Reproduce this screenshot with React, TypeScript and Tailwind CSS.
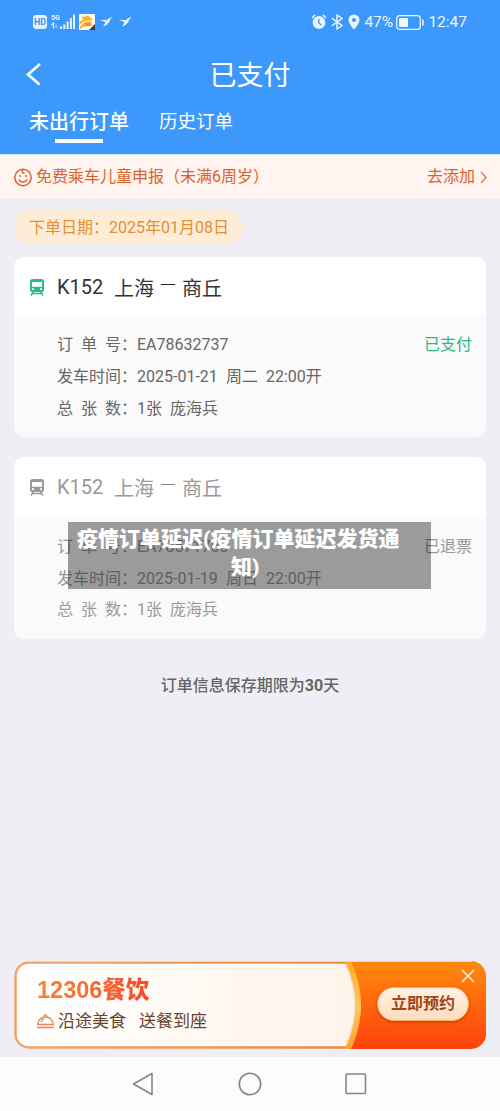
import React from "react";

function StatusBar() {
  return (
    <div className="flex h-[44px] items-center pl-[33px] pr-[33px] text-[#e9f5ff]">
      <div className="flex h-[14px] w-[14px] items-center justify-center rounded-[3px] bg-[#e4f2ff] text-[9px] leading-none font-bold text-[#3c98fb]">HD</div>
      <div className="ml-[4px] flex h-[16px] w-[24px]">
        <div className="flex w-[9px] flex-col">
          <span className="text-[7px] leading-[8px] font-bold">5G</span>
          <svg width="8" height="7" viewBox="0 0 8 7" fill="none" stroke="#e9f5ff">
            <path d="M0.5 3L2.5 1V6.5" strokeWidth="1.2" />
            <path d="M5 1V6L6.5 4" strokeWidth="1" opacity=".5" />
          </svg>
        </div>
        <svg width="15" height="16" viewBox="0 0 15 16" fill="#e9f5ff">
          <path d="M0 12.5h2V15H0zM3.300 10.500h2V15h-2zM6.600 7.500h2V15h-2zM9.900 4h2v11h-2zM13 .5h2V15h-2z" />
        </svg>
      </div>
      <svg className="ml-[4px]" width="16" height="16" viewBox="0 0 16 16">
        <path fill="#fffaf0" d="M0 0h16v16H0z" />
        <path fill="#f6b52b" d="M2.500 2.500L5 3l3-1.500 2 .5 1 1.500 2.500 1.500-1 1.500-6 .5-3 1.500L.5 11V7.500L4 6z" />
        <path fill="#f6b52b" d="M6 8l7-.5-1 2.500 2 1-2 1H8l-4 1-3 2v-2.500L4 10z" />
        <path fill="#f58a32" d="M6 9.500l4.500-1 1 3.500H6.500z" />
        <path fill="#423b36" d="M16 10v6h-6z" />
      </svg>
      <Bird className="ml-[5px]" />
      <Bird className="ml-[6px]" />
      <div className="ml-auto flex items-center">
        <svg width="16" height="16" viewBox="0 0 16 16" fill="none">
          <circle cx="8" cy="8.500" r="6.400" fill="#e9f5ff" />
          <path d="M1 4L4 1M12 1l3 3" stroke="#e9f5ff" strokeWidth="1.600" />
          <path d="M7.800 5v4l2.500 2" stroke="#3c98fb" strokeWidth="1.400" />
        </svg>
        <svg className="ml-[4px]" width="12" height="16" viewBox="0 0 12 16" fill="none" stroke="#e9f5ff" strokeWidth="1.500">
          <path d="M0.800 4.200L11 11.500L6 15V1l5 3.500L0.800 11.800" />
        </svg>
        <svg className="ml-[5px]" width="12" height="16" viewBox="0 0 12 16">
          <path fill="#e9f5ff" fillRule="evenodd" d="M6 .5a5.500 5.500 0 0 0-5.500 5.500C.5 10 6 15.500 6 15.500S11.500 10 11.500 6A5.500 5.500 0 0 0 6 .5zM6 4a2 2 0 1 1 0 4 2 2 0 0 1 0-4z" />
        </svg>
        <span className="ml-[4px] w-[29px] text-[15.500px] leading-[20px] whitespace-nowrap">47%</span>
        <svg className="ml-[3px]" width="29" height="15" viewBox="0 0 29 15" fill="none">
          <rect x=".7" y=".7" width="23.600" height="13.600" rx="2.800" stroke="#e9f5ff" strokeWidth="1.300" />
          <rect x="3" y="3" width="9" height="9" rx="1" fill="#e9f5ff" />
          <path d="M27 4.500v6" stroke="#e9f5ff" strokeWidth="1.500" />
        </svg>
        <span className="ml-[3px] text-[15.500px] leading-[20px]">12:47</span>
      </div>
    </div>
  );
}

function Bird({ className }: { className: string }) {
  return (
    <svg className={className} width="13" height="10" viewBox="0 0 13 10" fill="#e9f5ff">
      <path d="M0 3.200L4.500 2.700l2.200.8C8 1.500 10 .5 13 .2c-2 .9-3.200 2.400-3.700 4.800L6.500 8 3 9.800 5 6.500 4.800 4.600z" />
    </svg>
  );
}

function TrainIcon({ color }: { color: string }) {
  return (
    <svg className="mt-[22px] ml-[16px] shrink-0" width="14" height="17" viewBox="0 0 14 17">
      <path fill={color} fillRule="evenodd" d="M2.600 0h8.800C13 0 14 1 14 2.500v8.200c0 1.500-1 2.300-2.600 2.300H2.600C1 13 0 12.200 0 10.700V2.500C0 1 1 0 2.600 0zM2 3v4.800h10V3zM2 9.300v1.700h2V9.300zM10 9.300v1.700h2V9.300z" />
      <path d="M3.500 12.500L1 16.500M10.500 12.500l2.500 4M2.500 14.500h9" stroke={color} strokeWidth="1.500" fill="none" />
    </svg>
  );
}

type OrderProps = {
  number: string;
  date: string;
  day: string;
  status: string;
  refunded?: boolean;
};

function OrderCard({ number, date, day, status, refunded }: OrderProps) {
  return (
    <section className={refunded ? "mx-[14px] mt-[20px] h-[182px] shrink-0 overflow-hidden rounded-[10px] bg-[#fafafa] text-[#999]" : "mx-[14px] mt-[13px] h-[180px] shrink-0 overflow-hidden rounded-[10px] bg-[#fafafa] text-[#666]"}>
      <div className={refunded ? "flex h-[60px] bg-white text-[20px] leading-[28px] text-[#999]" : "flex h-[58px] bg-white text-[20px] leading-[28px] text-[#333]"}>
        <TrainIcon color={refunded ? "#999999" : "#2bbd90"} />
        <span className="mt-[16px] ml-[13px] w-[57px]">K152</span>
        <span className="mt-[18px] w-[47px]">上海</span>
        <span className={refunded ? "mt-[27px] h-px w-[14px] bg-[#888]" : "mt-[27px] h-px w-[14px] bg-[#222]"} />
        <span className="mt-[18px] ml-[7px]">商丘</span>
      </div>
      <div className="pt-[14px] pr-[14px] pl-[43px] text-[16px] leading-[32px] whitespace-pre">
        <div className="flex h-[32px] justify-between">
          <div className="flex">
            <Label chars={["订", "单", "号"]} />
            <span>{number}</span>
          </div>
          <span className={refunded ? "text-[#999]" : "text-[#29b985]"}>{status}</span>
        </div>
        <div className="flex h-[32px]">
          <span className="w-[80px]">发车时间：</span>
          <span className="w-[89px]">{date}</span>
          <span className="w-[40px]">{day}</span>
          <span>22:00开</span>
        </div>
        <div className={refunded ? "-mt-[1px] flex" : "flex"}>
          <Label chars={["总", "张", "数"]} />
          <span className="w-[33px]">1张</span>
          <span>庞海兵</span>
        </div>
      </div>
    </section>
  );
}

function Label({ chars }: { chars: string[] }) {
  return (
    <span className="flex w-[80px] gap-[8px]">
      <span>{chars[0]}</span>
      <span>{chars[1]}</span>
      <span>{chars[2]}：</span>
    </span>
  );
}

function MealBanner() {
  return (
    <div className="relative mx-[14px] mt-[265px] h-[88px] shrink-0 overflow-hidden rounded-[15px]">
      <svg className="absolute inset-0" width="472" height="88" viewBox="0 0 472 88">
        <defs>
          <linearGradient id="orange" x1="0" y1="0" x2="0" y2="1">
            <stop offset="0" stopColor="#ff8a0c" />
            <stop offset="1" stopColor="#ff420e" />
          </linearGradient>
          <linearGradient id="cream">
            <stop offset="0" stopColor="#ffffff" />
            <stop offset="1" stopColor="#fff4ea" />
          </linearGradient>
          <linearGradient id="gold" gradientUnits="userSpaceOnUse" x1="0" y1="0" x2="0" y2="88">
            <stop offset="0" stopColor="#ffaa2c" />
            <stop offset=".5" stopColor="#ffc95e" />
            <stop offset="1" stopColor="#ffa126" />
          </linearGradient>
          <linearGradient id="edge">
            <stop offset="0" stopColor="#f2a36b" />
            <stop offset="1" stopColor="#ec8b3c" />
          </linearGradient>
        </defs>
        <path d="M335 0h137v88H335z" fill="url(#orange)" />
        <path d="M15 1.500H335Q355 44 335 86.500H15A13.500 13.500 0 0 1 1.500 73V15A13.500 13.500 0 0 1 15 1.500z" fill="url(#cream)" stroke="url(#edge)" strokeWidth="2.500" />
        <path d="M332 3Q351 44 332 85" fill="none" stroke="#f7dfd0" strokeWidth="2.500" />
        <path d="M334 0Q354.500 44 334 88" fill="none" stroke="url(#gold)" strokeWidth="5.500" />
        <path d="M14 .5H458" stroke="#ffcda0" strokeWidth="1" />
        <path d="M448 9l12 12M460 9l-12 12" stroke="#fff0df" strokeWidth="1.600" />
      </svg>
      <div className="relative flex h-full justify-between pr-[17px] pl-[23px]">
        <div className="pt-[11px]">
          <div className="h-[33px] w-max bg-gradient-to-r from-[#f68534] to-[#f44a2e] bg-clip-text text-[23.500px] leading-[33px] font-bold text-transparent">
            <span className="font-['Liberation_Sans',sans-serif]">12306</span>
            <span className="font-['Noto_Sans_CJK_SC',sans-serif] font-black">餐饮</span>
          </div>
          <div className="flex h-[32px] items-center text-[17px] leading-[24px] text-[#664330]">
            <svg className="mr-[4px]" width="17" height="15" viewBox="0 0 17 15" fill="none" stroke="#ef8549" strokeWidth="1.300">
              <path d="M.7 10.500h15.600C16 6 12.700 3 8.500 3S1 6 .7 10.500zM7 2.500c0-2.300 3-2.300 3 0M0 13.500h17M4 8c.5-1.600 1.500-2.500 3-2.800" />
            </svg>
            <span className="w-[81px]">沿途美食</span>
            <span>送餐到座</span>
          </div>
        </div>
        <button className="mt-[26px] h-[34px] w-[92px] rounded-full border border-[#ffb163] bg-gradient-to-b from-[#fff4e4] to-[#ffdcc0] text-[16px] leading-[32px] font-bold text-[#a34518] shadow-[0_1px_3px_#b93b00]">立即预约</button>
      </div>
    </div>
  );
}

export default function App() {
  return (
    <main className="relative flex h-[1111px] w-[500px] flex-col overflow-hidden bg-[#efeef4] font-['Roboto','Noto_Sans_CJK_SC',sans-serif]">
      <header className="h-[154px] shrink-0 bg-[#3c98fb] text-white">
        <StatusBar />
        <div className="grid h-[62px] grid-cols-3 items-center">
          <svg className="ml-[26px] -mt-[3px]" width="16" height="24" viewBox="0 0 16 24" fill="none" stroke="white" strokeWidth="2.600">
            <path d="M14 2L2 12.500L13.500 22.500" />
          </svg>
          <h1 className="mt-[2px] text-center text-[27px] leading-[40px]">已支付</h1>
        </div>
        <nav className="flex pl-[29px]">
          <div className="w-[130px]">
            <div className="pt-[1px] text-[20px] leading-[30px] font-medium">未出行订单</div>
            <div className="mt-[2px] ml-[26px] h-[4px] w-[48px] bg-white" />
          </div>
          <span className="pt-[1px] text-[18.500px] leading-[31px]">历史订单</span>
        </nav>
      </header>
      <div className="flex h-[45px] shrink-0 items-center border-t border-[#dceaf8] bg-[#fff4ef] pr-[12px] pl-[14px] text-[16px] text-[#d9632f]">
        <svg className="mr-[4px]" width="18" height="19" viewBox="0 0 18 19" fill="none" stroke="#d9632f" strokeWidth="1.500">
          <circle cx="9" cy="9.500" r="8.200" />
          <path d="M9 1.500c-1.800 2-.5 4 1.500 3.200M4.800 11.500c1.800 3.400 6.600 3.400 8.400 0" />
          <path d="M6 7v2M12 7v2" />
        </svg>
        <span className="-mt-[1px]">免费乘车儿童申报（未满6周岁）</span>
        <span className="-mt-[1px] ml-auto">去添加</span>
        <svg className="ml-[5px]" width="8" height="13" viewBox="0 0 8 13" fill="none" stroke="#dc7a4e" strokeWidth="1.400">
          <path d="M1 1l5 5.500L1 12" />
        </svg>
      </div>
      <div className="mt-[11px] ml-[14px] h-[34px] w-[229px] shrink-0 rounded-full bg-[#ffecd5] pl-[15px] text-[16px] leading-[36px] whitespace-nowrap text-[#e28f38]">下单日期：2025年01月08日</div>
      <OrderCard number="EA78632737" date="2025-01-21" day="周二" status="已支付" />
      <OrderCard number="EA78571763" date="2025-01-19" day="周日" status="已退票" refunded />
      <p className="mt-[35px] h-[22px] shrink-0 text-center text-[16px] leading-[24px] font-medium text-[#666]">订单信息保存期限为<b className="font-bold">30</b>天</p>
      <MealBanner />
      <footer className="mt-auto flex h-[54px] shrink-0 items-center justify-center gap-[83px] bg-[#fcfcfc] pr-[2px]">
        <svg width="24" height="26" viewBox="0 0 24 26" fill="none" stroke="#858585" strokeWidth="1.600">
          <path d="M21 2.500v21L2.500 13z" strokeLinejoin="round" />
        </svg>
        <svg width="24" height="26" viewBox="0 0 24 26" fill="none" stroke="#858585" strokeWidth="1.600">
          <circle cx="12" cy="13" r="10.700" />
        </svg>
        <svg width="22" height="26" viewBox="0 0 22 26" fill="none" stroke="#858585" strokeWidth="1.600">
          <rect x="1" y="3" width="19.500" height="19.500" rx="1" />
        </svg>
      </footer>
      <div className="absolute top-[522px] left-[68px] h-[67px] w-[363px] bg-black/38 pt-[3px] text-[21px] leading-[28px] font-black whitespace-nowrap text-white">
        <div className="pl-[9px]">疫情订单延迟(疫情订单延迟发货通</div>
        <div className="pl-[163px]">知)</div>
      </div>
    </main>
  );
}
